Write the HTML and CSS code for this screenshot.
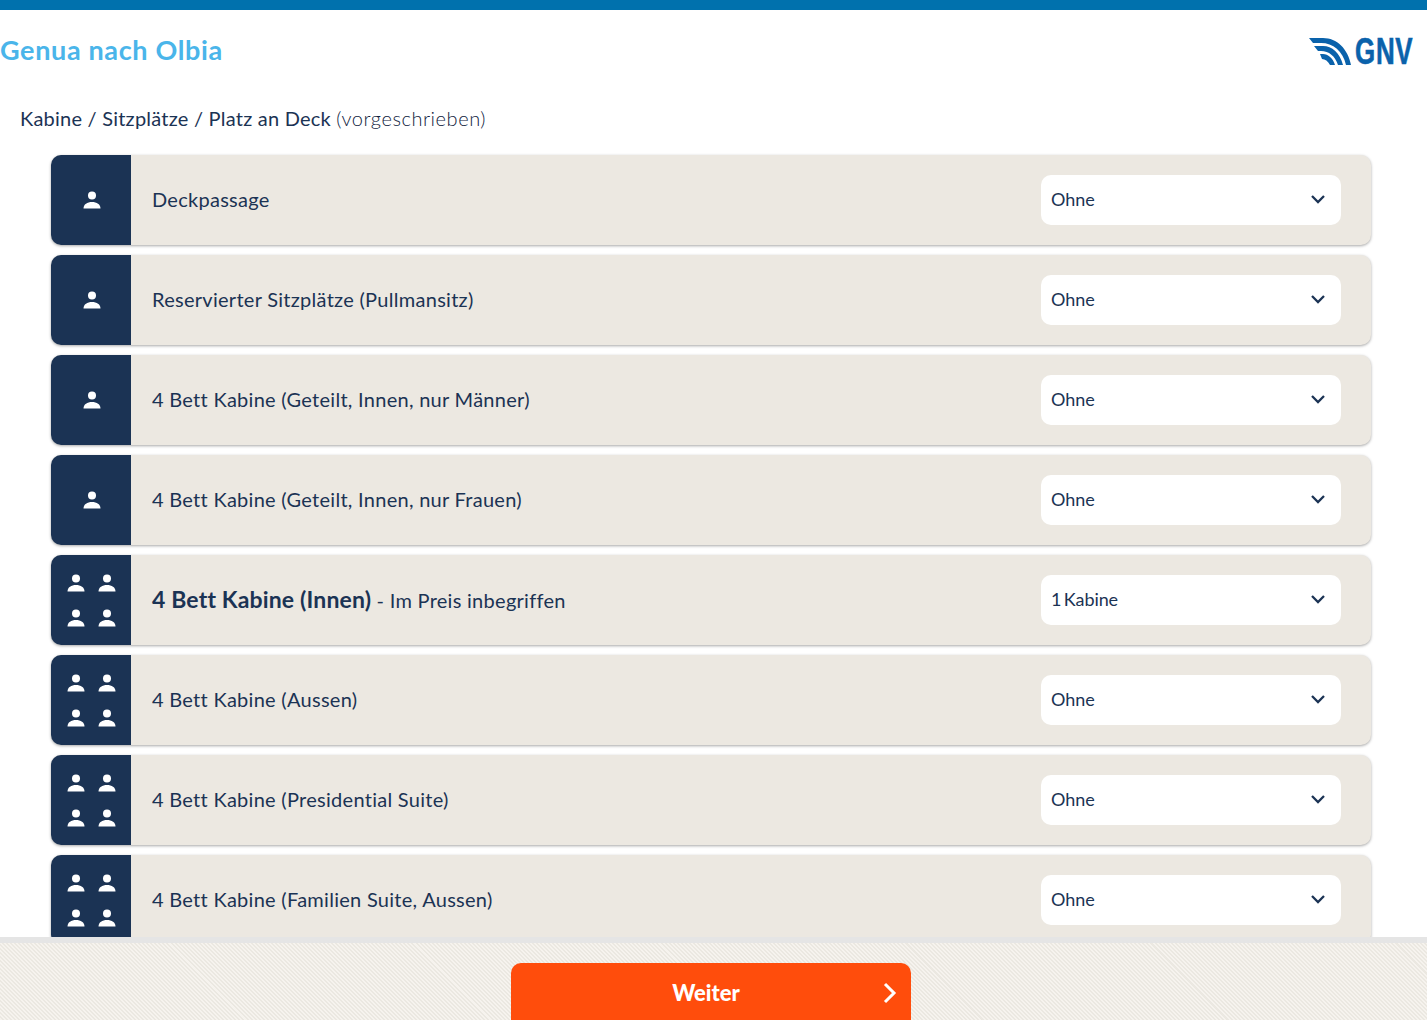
FILE: index.html
```html
<!DOCTYPE html>
<html lang="de">
<head>
<meta charset="utf-8">
<title>Genua nach Olbia</title>
<link rel="stylesheet" href="styles.css">
</head>
<body>
<svg class="defs" width="0" height="0" aria-hidden="true">
  <symbol id="person" viewBox="0 0 18 18">
    <circle cx="9" cy="4.6" r="4"/>
    <path d="M.5 17.500C.5 13.300 4.300 11 9 11s8.500 2.300 8.500 6.500z"/>
  </symbol>
  <symbol id="chev" viewBox="0 0 16 10">
    <path d="M2 2l6 6 6-6" fill="none" stroke="currentColor" stroke-width="2.300"/>
  </symbol>
</svg>
<div class="topbar"></div>
<header class="head">
  <h1 class="route">Genua nach Olbia</h1>
  <div class="logo">
    <svg class="logo-arcs" viewBox="0 0 44 29" aria-hidden="true">
      <path d="M0 1H14C28 1 39 12 42 28H37C34 14 24 6 12 6H4z"/>
      <path d="M5 9H14C23 9 31 16 34 28H29C26 19 20 14 12 14H9z"/>
      <path d="M11 17H14C19 17 24 21 26 28H21C19 24 16 22 13 22z"/>
    </svg>
    <span class="logo-text">GNV</span>
  </div>
</header>
<h2 class="section">Kabine / Sitzplätze / Platz an Deck <span class="light">(vorgeschrieben)</span></h2>
<main class="list">
  <div class="row"><div class="ico"><svg class="p"><use href="#person"/></svg></div><div class="lbl">Deckpassage</div><div class="sel"><span>Ohne</span><svg class="chev"><use href="#chev"/></svg></div></div>
  <div class="row"><div class="ico"><svg class="p"><use href="#person"/></svg></div><div class="lbl">Reservierter Sitzplätze (Pullmansitz)</div><div class="sel"><span>Ohne</span><svg class="chev"><use href="#chev"/></svg></div></div>
  <div class="row"><div class="ico"><svg class="p"><use href="#person"/></svg></div><div class="lbl">4 Bett Kabine (Geteilt, Innen, nur Männer)</div><div class="sel"><span>Ohne</span><svg class="chev"><use href="#chev"/></svg></div></div>
  <div class="row"><div class="ico"><svg class="p"><use href="#person"/></svg></div><div class="lbl">4 Bett Kabine (Geteilt, Innen, nur Frauen)</div><div class="sel"><span>Ohne</span><svg class="chev"><use href="#chev"/></svg></div></div>
  <div class="row"><div class="ico quad"><svg class="p"><use href="#person"/></svg><svg class="p"><use href="#person"/></svg><svg class="p"><use href="#person"/></svg><svg class="p"><use href="#person"/></svg></div><div class="lbl"><strong>4 Bett Kabine (Innen)</strong> - Im Preis inbegriffen</div><div class="sel"><span class="tight">1 Kabine</span><svg class="chev"><use href="#chev"/></svg></div></div>
  <div class="row"><div class="ico quad"><svg class="p"><use href="#person"/></svg><svg class="p"><use href="#person"/></svg><svg class="p"><use href="#person"/></svg><svg class="p"><use href="#person"/></svg></div><div class="lbl">4 Bett Kabine (Aussen)</div><div class="sel"><span>Ohne</span><svg class="chev"><use href="#chev"/></svg></div></div>
  <div class="row"><div class="ico quad"><svg class="p"><use href="#person"/></svg><svg class="p"><use href="#person"/></svg><svg class="p"><use href="#person"/></svg><svg class="p"><use href="#person"/></svg></div><div class="lbl">4 Bett Kabine (Presidential Suite)</div><div class="sel"><span>Ohne</span><svg class="chev"><use href="#chev"/></svg></div></div>
  <div class="row"><div class="ico quad"><svg class="p"><use href="#person"/></svg><svg class="p"><use href="#person"/></svg><svg class="p"><use href="#person"/></svg><svg class="p"><use href="#person"/></svg></div><div class="lbl">4 Bett Kabine (Familien Suite, Aussen)</div><div class="sel"><span>Ohne</span><svg class="chev"><use href="#chev"/></svg></div></div>
</main>
<footer class="foot">
  <button class="next"><span>Weiter</span>
    <svg class="next-arrow" viewBox="0 0 14 22" aria-hidden="true"><path d="M2 2l9 9-9 9" fill="none" stroke="#fff" stroke-width="3"/></svg>
  </button>
</footer>
</body>
</html>
```
FILE: styles.css
```css
* { box-sizing: border-box; }
html, body { height: 100%; }
body {
  margin: 0;
  overflow: hidden;
  background: #fff;
  color: #1b3354;
  font-family: Lato, "Liberation Sans", sans-serif;
}
.defs { position: absolute; }
.topbar { height: 10px; background: #0071ad; }
.head {
  display: flex;
  justify-content: space-between;
  align-items: center;
  height: 82px;
  padding: 0 13px 0 0;
}
.route {
  margin: 0 0 3px;
  font-size: 27px;
  font-weight: 700;
  color: #4ab5ea;
  letter-spacing: .65px;
}
.logo { display: flex; align-items: center; gap: 2px; color: #0a62ab; }
.logo-arcs { width: 44px; height: 29px; fill: #0a62ab; }
.logo-text {
  display: inline-block;
  width: 59px;
  font-family: "Liberation Sans", sans-serif;
  font-weight: 700;
  font-size: 36px;
  line-height: 29px;
  letter-spacing: 1px;
  transform: scaleX(.72);
  transform-origin: left center;
  -webkit-text-stroke: .6px #0a62ab;
}
.section {
  margin: 0;
  padding: 13px 0 0 20px;
  height: 63px;
  font-size: 20px;
  line-height: 26px;
  font-weight: 400;
  letter-spacing: .23px;
}
.light { font-weight: 300; letter-spacing: .55px; color: #0f2240; }
.list {
  display: flex;
  flex-direction: column;
  gap: 10px;
  padding: 0 56px 0 51px;
}
.row {
  display: flex;
  align-items: center;
  flex: none;
  height: 90px;
  border-radius: 10px;
  background: #ece8e1;
  box-shadow: 0 1px 3px rgba(0, 0, 0, .35);
  overflow: hidden;
}
.ico {
  flex: none;
  display: flex;
  align-items: center;
  justify-content: center;
  align-self: stretch;
  width: 80px;
  padding-left: 1px;
  background: #1b3354;
}
.p { width: 18px; height: 18px; fill: #fff; }
.quad {
  display: grid;
  grid-template-columns: 18px 18px;
  grid-auto-rows: 18px;
  column-gap: 13px;
  row-gap: 17px;
  justify-content: center;
  align-content: center;
  padding-left: 0;
}
.lbl {
  flex: 1;
  margin-top: -2px;
  padding-left: 21px;
  font-size: 20px;
  letter-spacing: .28px;
}
.lbl strong { font-size: 23px; font-weight: 700; letter-spacing: .15px; }
.sel {
  flex: none;
  display: flex;
  align-items: center;
  justify-content: space-between;
  width: 300px;
  height: 50px;
  margin-right: 30px;
  padding: 0 15px 2px 10px;
  border-radius: 10px;
  background: #fff;
  font-size: 18px;
}
.tight { word-spacing: -2px; letter-spacing: -.1px; }
.chev { width: 16px; height: 10px; color: #1b3354; }
.foot {
  position: fixed;
  left: 0;
  right: 0;
  bottom: 0;
  display: flex;
  justify-content: center;
  height: 83px;
  padding: 20px 5px 0 0;
  border-top: 6px solid #e5e5e5;
  background: repeating-linear-gradient(45deg, #f6f3ee 0, #f6f3ee 1.42px, #ebe8e1 1.42px, #ebe8e1 2.84px);
}
.next {
  position: relative;
  flex: none;
  display: flex;
  justify-content: center;
  width: 400px;
  height: 70px;
  padding: 16px 10px 40px 0;
  border: 0;
  border-radius: 10px;
  background: #ff4d0c;
  color: #fff;
  font-family: Lato, "Liberation Sans", sans-serif;
  font-size: 22px;
  font-weight: 900;
}
.next-arrow {
  position: absolute;
  right: 14px;
  top: 19px;
  width: 14px;
  height: 22px;
}
```
